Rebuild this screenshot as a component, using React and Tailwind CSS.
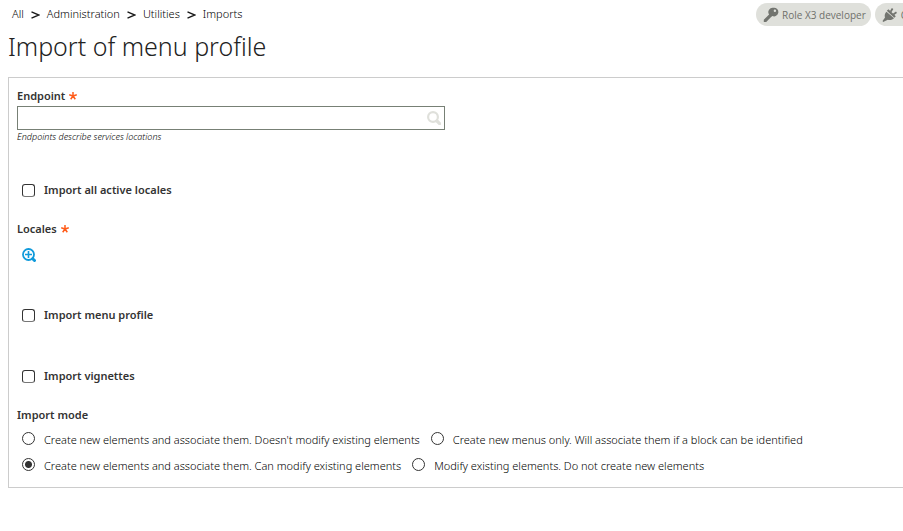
import React from "react";

const crumbs = ["All", "Administration", "Utilities", "Imports"];

const modeRows = [
  [
    { id: "create", label: "Create new elements and associate them. Doesn't modify existing elements" },
    { id: "menus", label: "Create new menus only. Will associate them if a block can be identified" },
  ],
  [
    { id: "createModify", label: "Create new elements and associate them. Can modify existing elements" },
    { id: "modify", label: "Modify existing elements. Do not create new elements" },
  ],
];

function Chevron() {
  return (
    <svg aria-hidden="true" viewBox="0 0 9 8" className="mt-0.5 h-2 w-[9px]" fill="none" stroke="#1a1a1a" strokeWidth="1.4">
      <path d="M.5 .8 8 4 .5 7.2" />
    </svg>
  );
}

function Required() {
  return (
    <svg aria-label="required" viewBox="0 0 8 8" className="h-2 w-2" fill="none" stroke="#ff5c1a" strokeWidth="1.5">
      <path d="M4 4V0M4 4 .2 2.8M4 4l3.8-1.2M4 4 1.7 7.3M4 4l2.3 3.3" />
    </svg>
  );
}

function KeyIcon() {
  return (
    <svg aria-hidden="true" viewBox="0 0 16 16" className="h-4 w-4 shrink-0" fill="#72746f">
      <path
        fillRule="evenodd"
        d="M10.600.8a4.300 4.300 0 1 1-1.300 8.200L7.600 10.400 3.200 15H.8v-2.200L6.100 7.600A4.400 4.400 0 0 1 10.600.8Zm1.300 1.700a1.200 1.200 0 1 0 0 2.400 1.200 1.200 0 0 0 0-2.400Z"
      />
    </svg>
  );
}

function PlugIcon() {
  return (
    <svg aria-hidden="true" viewBox="0 0 16 16" className="h-4 w-4 shrink-0" fill="#72746f">
      <path d="M4.500 4.800 12 11.300c-1.600 1.700-3.800 2.100-6.200 1.500L1.200 15l-.7-.9L3 10.600c-.7-2.200-.2-4.200 1.500-5.800Z" />
      <path d="m4.800 3.800 1.600-1.500 7.400 6.900-1.500 1.600Z" />
      <path d="m8.600 4.800 2-3.300M11.300 7.400l3.200-2.100" fill="none" stroke="#72746f" strokeWidth="1.800" />
    </svg>
  );
}

function CheckRow({ label, className }) {
  return (
    <label className={"flex h-4 items-center gap-[9px] pl-[5px] font-semibold " + className}>
      <input
        type="checkbox"
        className="h-[13px] w-[13px] appearance-none rounded-[3px] border border-[#333] border-b-[#777] bg-white checked:bg-[#333]"
      />
      {label}
    </label>
  );
}

function Badge({ icon, label }) {
  return (
    <button type="button" className="flex h-[23px] shrink-0 items-center gap-[3px] rounded-full bg-[#dfe0db] pr-[5px] pl-[7px] font-['Open_Sans',sans-serif] text-[10px] whitespace-nowrap text-[#6f706b]">
      {icon}
      {label}
    </button>
  );
}

export default function App() {
  return (
    <div className="overflow-hidden bg-white pl-2 font-['Noto_Sans',sans-serif] text-[11px] leading-4 text-[#333]">
      <header className="flex items-start justify-between pt-[3px]">
        <nav aria-label="Breadcrumb" className="flex h-[22px] items-center gap-[7px] pl-1 font-light text-black">
          {crumbs.map((crumb, i) => (
            <React.Fragment key={crumb}>
              {i > 0 && <Chevron />}
              <a href="#">{crumb}</a>
            </React.Fragment>
          ))}
        </nav>
        <div className="flex w-[147px] gap-1 overflow-hidden">
          <Badge icon={<KeyIcon />} label="Role X3 developer" />
          <Badge icon={<PlugIcon />} label="Control" />
        </div>
      </header>
      <h1 className="mt-[4px] text-[25px] leading-8 font-light text-[#222]">Import of menu profile</h1>

      <form className="mt-[15px] border border-r-0 border-[#ccc] px-2 pt-[10px] pb-[13px]">
        <label htmlFor="endpoint" className="flex h-4 items-center gap-1 font-semibold">
          Endpoint <Required />
        </label>
        <div className="mt-0.5 flex h-6 w-full max-w-[428px] items-center border border-[#778075] pr-[3px]">
          <input id="endpoint" type="text" className="h-full min-w-0 flex-1 px-1 outline-none" />
          <button type="button" aria-label="Search endpoints">
            <svg viewBox="0 0 14 14" className="h-[14px] w-[14px]" fill="none" stroke="#dfe0db">
              <circle cx="6" cy="6" r="4.900" strokeWidth="2.200" />
              <path d="m10 10 2.600 2.600" strokeWidth="3.200" strokeLinecap="round" />
            </svg>
          </button>
        </div>
        <p className="text-[9px] leading-[14px] font-light text-black italic">Endpoints describe services locations</p>

        <CheckRow label="Import all active locales" className="mt-[38px]" />

        <div className="mt-[23px] flex h-4 items-center gap-1 font-semibold">
          Locales <Required />
        </div>
        <button type="button" aria-label="Add locales" className="mt-[11px] ml-[5px] block">
          <svg viewBox="0 0 14 14" className="h-[14px] w-[14px]" fill="none" stroke="#0f9adb">
            <circle cx="6.500" cy="6.500" r="5.500" strokeWidth="1.800" />
            <path d="M6.500 3v7M3 6.500h7" strokeWidth="1.600" />
            <path d="m10.700 10.700 1.800 1.800" strokeWidth="3" strokeLinecap="round" />
          </svg>
        </button>

        <CheckRow label="Import menu profile" className="mt-[45px]" />
        <CheckRow label="Import vignettes" className="mt-[45px]" />

        <fieldset className="mt-[23px]">
          <legend className="font-semibold">Import mode</legend>
          <div className="flex flex-col gap-[10px] pt-[9px] pl-[5px] font-light text-black">
            {modeRows.map((row) => (
              <div key={row[0].id} className="flex gap-[11px]">
                {row.map((mode) => (
                  <label key={mode.id} className="flex h-4 gap-[9px] whitespace-nowrap">
                    <input
                      type="radio"
                      name="mode"
                      defaultChecked={mode.id === "createModify"}
                      className="h-[13px] w-[13px] shrink-0 appearance-none rounded-full border border-[#333] bg-white checked:bg-[radial-gradient(circle,#333_3px,white_4px)]"
                    />
                    {mode.label}
                  </label>
                ))}
              </div>
            ))}
          </div>
        </fieldset>
      </form>
    </div>
  );
}
